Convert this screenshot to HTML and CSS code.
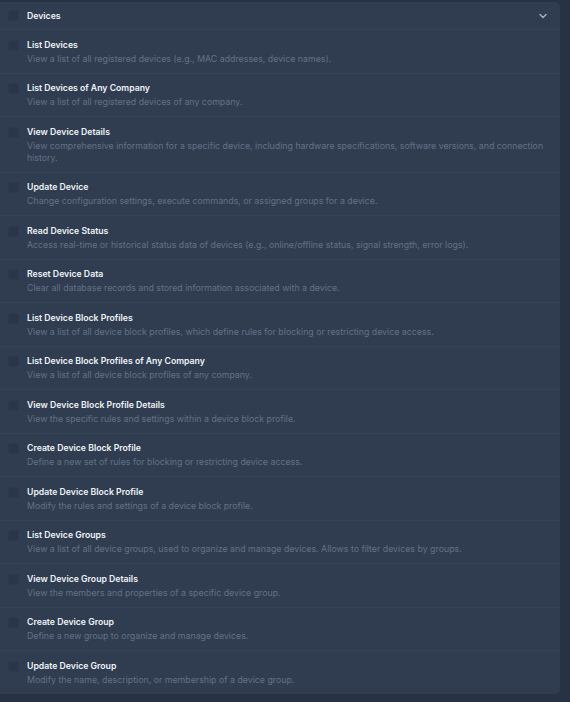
FILE: index.html
```html
<!DOCTYPE html>
<html>
<head>
  <meta charset="UTF-8">
  <title>Devices</title>
  <link rel="stylesheet" href="styles.css">
</head>
<body>
  <div class="tarjeta">
    <div class="cabecera">
      <span class="casilla"></span>
      <span class="titulo">Devices</span>
      <svg class="flecha" width="8" height="6" viewBox="0 0 8 6">
        <path d="M1 1.5 L4 4.5 L7 1.5" fill="none" stroke="#a7b1c2" stroke-width="1.4" stroke-linecap="round" stroke-linejoin="round"/>
      </svg>
    </div>
    <div id="permisos"></div>
  </div>
  <script>
    let permisos = [
      ["List Devices", "View a list of all registered devices (e.g., MAC addresses, device names)."],
      ["List Devices of Any Company", "View a list of all registered devices of any company."],
      ["View Device Details", "View comprehensive information for a specific device, including hardware specifications, software versions, and connection history."],
      ["Update Device", "Change configuration settings, execute commands, or assigned groups for a device."],
      ["Read Device Status", "Access real-time or historical status data of devices (e.g., online/offline status, signal strength, error logs)."],
      ["Reset Device Data", "Clear all database records and stored information associated with a device."],
      ["List Device Block Profiles", "View a list of all device block profiles, which define rules for blocking or restricting device access."],
      ["List Device Block Profiles of Any Company", "View a list of all device block profiles of any company."],
      ["View Device Block Profile Details", "View the specific rules and settings within a device block profile."],
      ["Create Device Block Profile", "Define a new set of rules for blocking or restricting device access."],
      ["Update Device Block Profile", "Modify the rules and settings of a device block profile."],
      ["List Device Groups", "View a list of all device groups, used to organize and manage devices. Allows to filter devices by groups."],
      ["View Device Group Details", "View the members and properties of a specific device group."],
      ["Create Device Group", "Define a new group to organize and manage devices."],
      ["Update Device Group", "Modify the name, description, or membership of a device group."]
    ];

    let contenedor = document.querySelector("#permisos");
    permisos.forEach(permiso => {
      let fila = document.createElement("div");
      fila.classList.add("fila");
      let casilla = document.createElement("span");
      casilla.classList.add("casilla");
      fila.appendChild(casilla);
      let texto = document.createElement("div");
      texto.classList.add("texto");
      let titulo = document.createElement("div");
      titulo.classList.add("titulo");
      titulo.textContent = permiso[0];
      let desc = document.createElement("div");
      desc.classList.add("descripcion");
      desc.textContent = permiso[1];
      texto.appendChild(titulo);
      texto.appendChild(desc);
      fila.appendChild(texto);
      contenedor.appendChild(fila);
    });
  </script>
</body>
</html>
```

FILE: styles.css
```css
:root {
  --fondo: #273245;
  --tarjeta: #303d50;
  --linea: #364255;
  --casilla: #2a3547;
  --texto: #eef2f7;
  --gris: #627189;
}
body {
  font-family: Inter, 'Noto Sans', sans-serif;
  background: var(--fondo);
  margin: 0;
  padding: 2px 10px 8px 0;
}
.tarjeta {
  width: 560px;
  background: var(--tarjeta);
  border-radius: 0 5px 5px 0;
}
.cabecera {
  display: flex;
  align-items: center;
  padding: 6.5px 13px 6.5px 8px;
  border-bottom: 1px solid var(--linea);
}
.cabecera .titulo {
  flex: 1;
}
.flecha {
  display: block;
}
.casilla {
  flex: none;
  width: 11px;
  height: 11px;
  box-sizing: border-box;
  background: var(--casilla);
  border: 1px solid #2d384a;
  border-radius: 2px;
  margin-right: 8px;
}
.titulo {
  font-size: 8.7px;
  line-height: 14px;
  font-weight: 600;
  color: var(--texto);
}
.fila {
  display: flex;
  align-items: flex-start;
  padding: 7.75px 10px 7.75px 8px;
  border-bottom: 1px solid var(--linea);
}
.fila:last-child {
  border-bottom: none;
}
.fila .casilla {
  margin-top: 2px;
}
.descripcion {
  margin-top: 1px;
  font-size: 8.8px;
  line-height: 12px;
  color: var(--gris);
}
```
